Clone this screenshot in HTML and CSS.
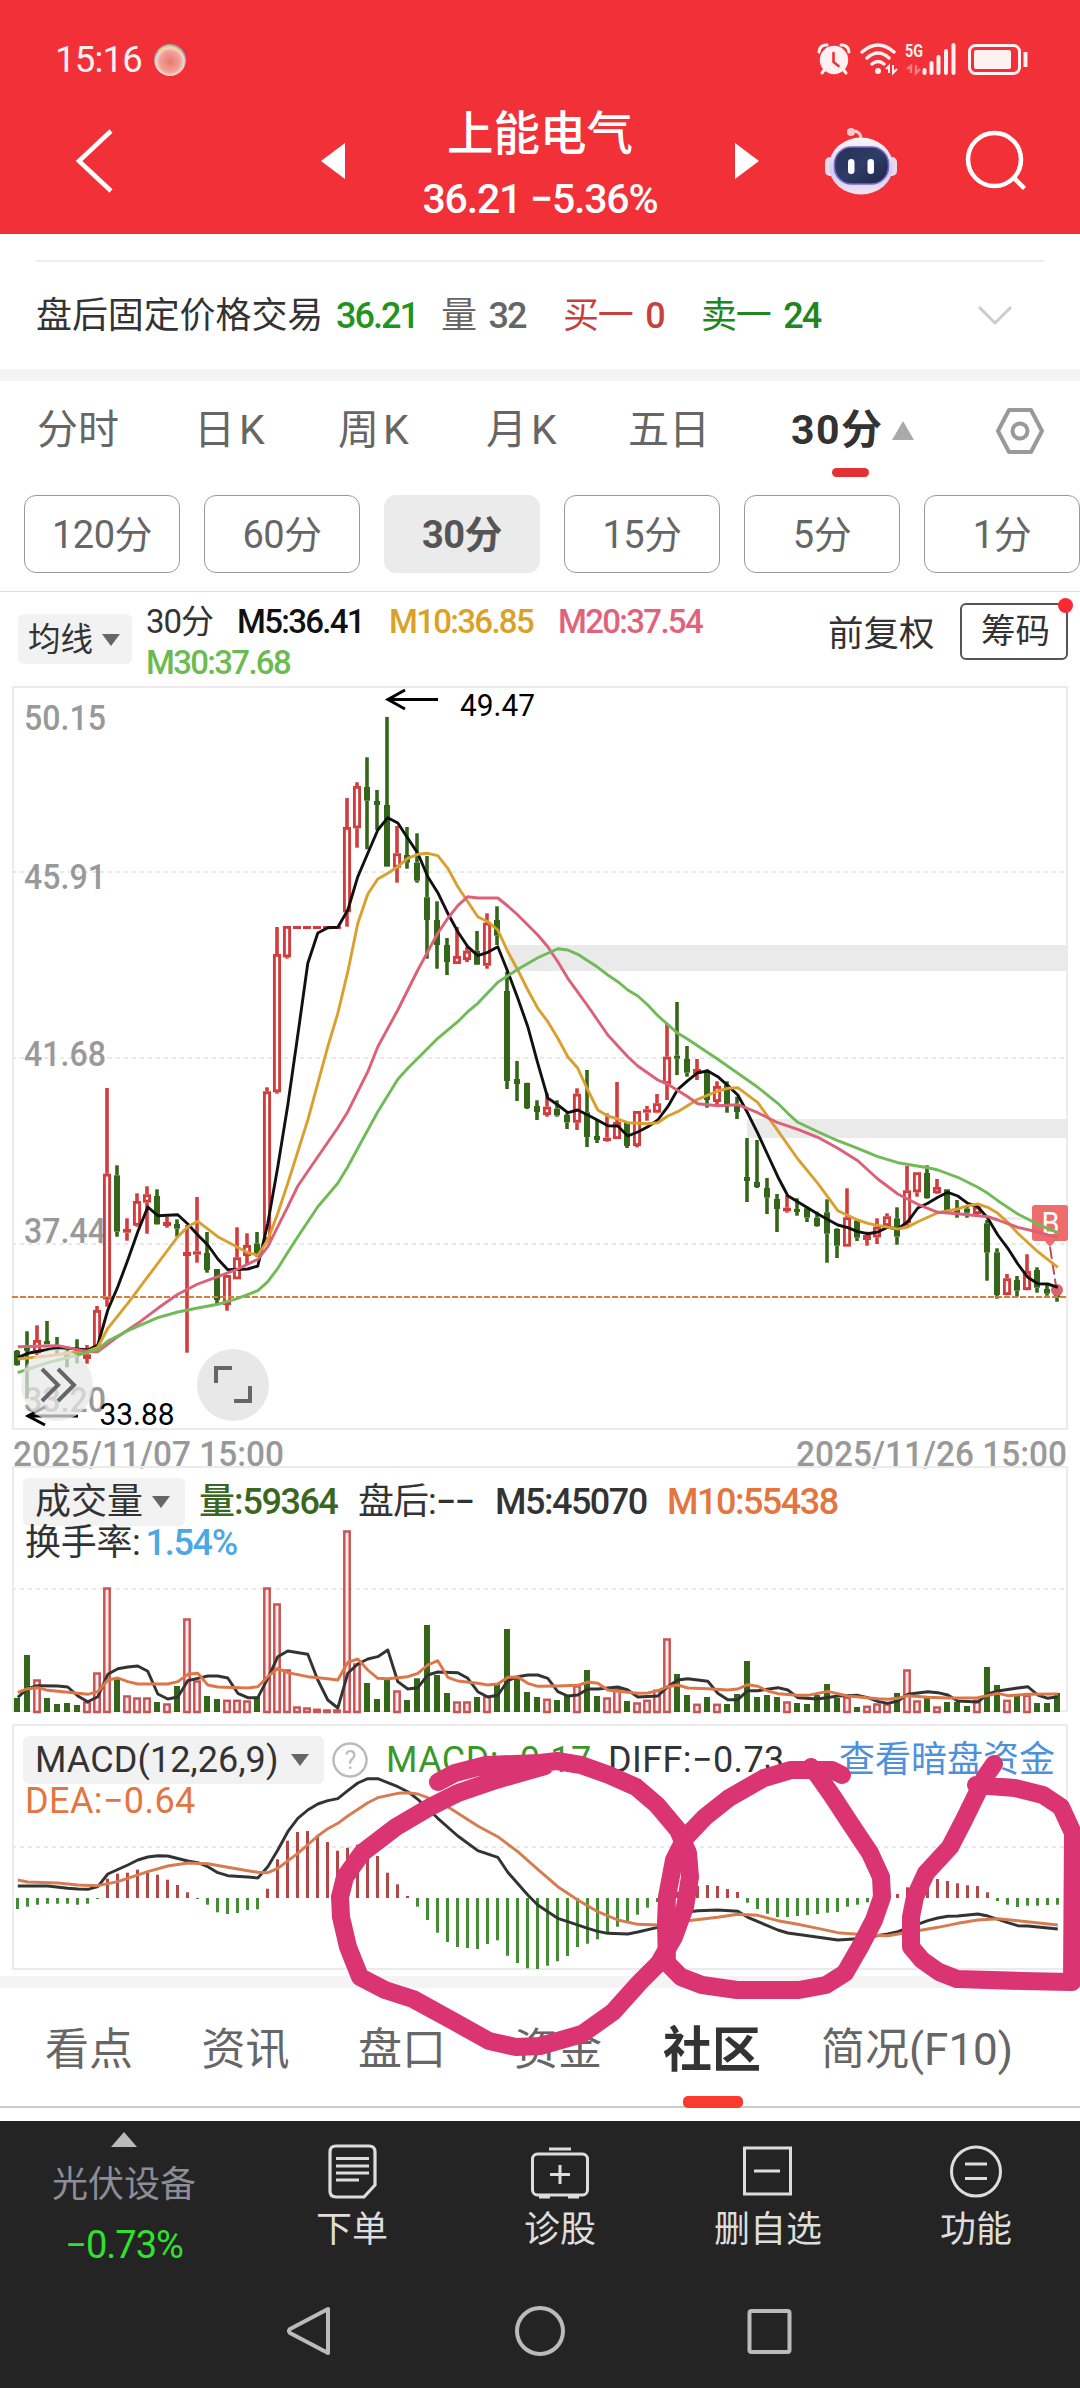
FILE: index.html
```
<!DOCTYPE html>
<html lang="zh-CN">
<head>
<meta charset="utf-8">
<title>上能电气 36.21</title>
<link rel="stylesheet" href="styles.css">
</head>
<body>
<div class="screen">
<header class="header">
  <div class="status">
    <span class="clock">15:16</span>
    <svg class="orb" width="34" height="34" viewBox="0 0 34 34">
      <defs><radialGradient id="orb" cx=".5" cy=".55" r=".5"><stop offset="0" stop-color="#e8796f"/><stop offset=".65" stop-color="#f2a197"/><stop offset=".88" stop-color="#f6d9cc"/><stop offset="1" stop-color="#8f9fc4"/></radialGradient></defs>
      <circle cx="17" cy="17" r="16" fill="url(#orb)"/><path d="M6 8Q17-2 28 9" fill="none" stroke="#f0cf7a" stroke-width="2"/>
    </svg>
    <svg class="status-icons" width="212" height="40" viewBox="816 40 212 40" fill="#fff1f1" stroke="#fff1f1">
      <g stroke="none"><circle cx="834" cy="60" r="14.2"/><path d="M818 50q1-6 8-6l-7 7zM850 50q-1-6-8-6l7 7z"/></g>
      <path d="M819 52a7 7 0 0 1 8-7M849 52a7 7 0 0 0-8-7M825 69l-3 4M843 69l3 4" fill="none" stroke-width="3" stroke-linecap="round"/>
      <path d="M833.500 53v9l5 4" fill="none" stroke="#f23037" stroke-width="2.600" stroke-linecap="round"/>
      <g fill="none" stroke-width="3.400" stroke-linecap="round"><path d="M862 52q16-14 32 0M867 58q11-10 22 0M872 64q6-5 12 0"/></g>
      <circle cx="878" cy="71" r="3" stroke="none"/>
      <path d="M889 73V66l-3 3M893 65v8l4-4" fill="none" stroke-width="2"/>
      <text x="905" y="57" class="net" textLength="18" lengthAdjust="spacingAndGlyphs" stroke="none">5G</text>
      <path d="M911 73V66l-4 3M916 65v8l4-4" fill="none" stroke="#f88085" stroke-width="2.400"/>
      <g fill="none" stroke-width="4" stroke-linecap="round"><path d="M924.500 70v3M931.500 63v10M938.500 57v16M946 51v22M953.500 45v28"/></g>
      <rect x="969.500" y="45.500" width="50" height="28" rx="6" fill="none" stroke-width="3"/>
      <rect x="974" y="50" width="37" height="19" rx="2" stroke="none"/><path d="M1025.500 52v15" stroke-width="4"/>
    </svg>
  </div>
  <div class="titlebar">
    <svg width="60" height="80" viewBox="60 120 60 80"><path d="M111 130L79 160L111 190" fill="none" stroke="#fff" stroke-width="4.500"/></svg>
    <svg width="26" height="38" viewBox="320 143 26 38"><path d="M345 144V180L321 162z" fill="#fff"/></svg>
    <div class="title"><h1>上能电气</h1><p>36.21 −5.36%</p></div>
    <svg width="26" height="38" viewBox="734 143 26 38"><path d="M735 144V180L759 162z" fill="#fff"/></svg>
    <svg class="robot" width="76" height="70" viewBox="823 124 76 70">
      <defs>
        <linearGradient id="hd" x1="0" y1="0" x2="0" y2="1"><stop offset="0" stop-color="#fdf4f7"/><stop offset=".6" stop-color="#cfcdf0"/><stop offset="1" stop-color="#f1e3f2"/></linearGradient>
        <linearGradient id="face" x1="0" y1="0" x2="1" y2="1"><stop offset="0" stop-color="#243257"/><stop offset=".5" stop-color="#2e3c66"/><stop offset="1" stop-color="#1b2547"/></linearGradient>
      </defs>
      <path d="M861 137q0-8-8-8" fill="none" stroke="#f9c9cd" stroke-width="3"/><circle cx="851" cy="130" r="4" fill="#f9c9cd"/>
      <rect x="825" y="155" width="12" height="19" rx="5" fill="#e9d9ee"/><rect x="885" y="155" width="12" height="19" rx="5" fill="#e9d9ee"/>
      <ellipse cx="861" cy="164" rx="32" ry="28.500" fill="url(#hd)"/>
      <rect x="834.500" y="145" width="54" height="37" rx="17" fill="url(#face)" stroke="#7a66cf" stroke-width="1.600"/>
      <rect x="848" y="157" width="6.500" height="15" rx="3.200" fill="#fff"/><rect x="867.500" y="157" width="6.500" height="15" rx="3.200" fill="#fff"/>
    </svg>
    <svg class="search" width="64" height="64" viewBox="963 130 64 64" fill="none" stroke="#fff" stroke-width="4.500"><circle cx="994.500" cy="160.500" r="26.500"/><path d="M1014 179l10.500 10.500"/></svg>
  </div>
</header>

<section class="fixed-price">
  <span class="c1">盘后固定价格交易</span><b class="c2 green">36.21</b><span class="c3">量 <b>32</b></span><span class="c4">买一 <b>0</b></span><span class="c5">卖一 <b>24</b></span>
  <svg width="40" height="26" viewBox="0 0 40 26"><path d="M4 4L20 20L36 4" fill="none" stroke="#ccc" stroke-width="3"/></svg>
</section>
<div class="gap"></div>

<nav class="periods">
  <span>分时</span><span>日<i>K</i></span><span>周<i>K</i></span><span>月<i>K</i></span><span>五日</span><span class="on">30分<svg width="24" height="20" viewBox="0 0 24 20"><path d="M12 0L23 19H1z" fill="#aaa"/></svg></span>
  <svg width="52" height="50" viewBox="0 0 52 50" fill="none" stroke="#999" stroke-width="4" stroke-linejoin="round"><path d="M15 4H37L48 25L37 46H15L4 25z"/><circle cx="26" cy="25" r="7.500"/></svg>
</nav>
<div class="pills"><span>120分</span><span>60分</span><span class="on">30分</span><span>15分</span><span>5分</span><span>1分</span></div>

<section class="ma">
  <div class="drop">均线<svg width="20" height="14" viewBox="0 0 20 14"><path d="M1 1H19L10 13z" fill="#666"/></svg></div>
  <div class="ma-values"><span style="width:91px">30分</span><b style="width:152px;color:#111">M5:36.41</b><b style="width:169px;color:#dba126">M10:36.85</b><b style="color:#e0637b">M20:37.54</b><b class="line2" style="color:#6cbb52">M30:37.68</b></div>
  <span class="adjust">前复权</span>
  <div class="chips">筹码<i></i></div>
</section>

<svg id="price" class="chart" width="1080" height="780"></svg>

<section class="panel volume">
  <svg id="vol" class="chart" width="1080" height="250"></svg>
  <div class="head">
    <div class="drop wide">成交量<svg width="20" height="14" viewBox="0 0 20 14"><path d="M1 1H19L10 13z" fill="#666"/></svg></div>
    <span style="width:159px;color:#3a6620"><em>量:</em><b>59364</b></span><span style="width:137px">盘后:<b>−−</b></span><b style="width:172px">M5:45070</b><b style="color:#e4753f">M10:55438</b>
  </div>
  <div class="head second">换手率:<b class="rate" style="color:#4ba8e2">1.54%</b></div>
</section>

<section class="panel macd">
  <svg id="macd" class="chart" width="1080" height="266"></svg>
  <div class="head">
    <div class="drop macd-drop"><b class="t-macd">MACD(12,26,9)</b><svg width="20" height="14" viewBox="0 0 20 14"><path d="M1 1H19L10 13z" fill="#666"/></svg></div>
    <svg class="help" width="38" height="38" viewBox="0 0 38 38"><circle cx="19" cy="19" r="16.500" fill="none" stroke="#bbb" stroke-width="2.500"/><text x="19" y="28" text-anchor="middle" class="q">?</text></svg>
    <b class="t-val" style="width:222px;color:#3b9728">MACD:−0.17</b><b class="t-val" style="width:231px">DIFF:−0.73</b><span class="link">查看暗盘资金</span>
  </div>
  <div class="head second"><b class="t-val" style="color:#e4753f">DEA:−0.64</b></div>
</section>
<div class="gap"></div>

<nav class="tabs"><span>看点</span><span>资讯</span><span>盘口</span><span>资金</span><span class="on">社区</span><span>简况(F10)</span></nav>

<footer class="footer">
  <div class="actions">
    <div class="sector"><svg width="26" height="16" viewBox="0 0 26 16"><path d="M13 0L26 15H0z" fill="#bbb"/></svg><span>光伏设备</span><b>−0.73%</b></div>
    <div class="action"><svg width="60" height="60" viewBox="322 2141 60 60" fill="none" stroke="#ddd" stroke-width="3.200"><path d="M336 2146h33q6 0 6 6v33l-11 12h-28q-6 0-6-6v-39q0-6 6-6z"/><path d="M336 2158.500h33M336 2166h33M336 2173h33M336 2180h23"/></svg>下单</div>
    <div class="action"><svg width="60" height="60" viewBox="530 2141 60 60" fill="none" stroke="#ddd" stroke-width="3"><rect x="532.500" y="2154" width="55" height="41" rx="5"/><path d="M549 2149h22M560 2165v19M550 2174.500h20M539 2197h11M568 2197h11"/></svg>诊股</div>
    <div class="action"><svg width="60" height="60" viewBox="738 2141 60 60" fill="none" stroke="#ddd" stroke-width="3"><rect x="744.500" y="2148" width="46" height="46"/><path d="M754 2171h26"/></svg>删自选</div>
    <div class="action"><svg width="60" height="60" viewBox="946 2141 60 60" fill="none" stroke="#ddd" stroke-width="3"><circle cx="976" cy="2171.500" r="24.500"/><path d="M965 2164h22M965 2178.500h22"/></svg>功能</div>
  </div>
  <div class="sysnav">
    <svg width="50" height="56" viewBox="284 2303 50 56"><path d="M328 2309V2353L290 2333q-2-2 0-4z" fill="none" stroke="#bbb" stroke-width="4" stroke-linejoin="round"/></svg>
    <svg width="56" height="56" viewBox="512 2303 56 56"><circle cx="540" cy="2331" r="23" fill="none" stroke="#bbb" stroke-width="4"/></svg>
    <svg width="50" height="56" viewBox="744 2303 50 56"><rect x="749.500" y="2311" width="40" height="41" rx="2" fill="none" stroke="#bbb" stroke-width="4"/></svg>
  </div>
</footer>

<svg class="ink" width="1080" height="330" viewBox="0 1740 1080 330" fill="none" stroke="#da3473" stroke-width="18" stroke-linecap="round" stroke-linejoin="round">
  <path d="M438 1782L455 1773L486 1765L540 1763L557 1761L581 1765L609 1775L636 1787L657 1805L678 1830L688 1853L690 1877L685 1907L674 1937L659 1963L640 1982L613 2012L582 2034L540 2046L516 2047L489 2041L455 2022L413 1999L385 1990L360 1977L348 1947L341 1917L340 1897L345 1877L362 1853L396 1827L430 1807L458 1793L496 1780L545 1766"/>
  <path d="M842 1775L832 1770L791 1770L764 1778L729 1798L705 1817L685 1838L674 1860L667 1897L666 1923L667 1963L681 1977L702 1985L737 1990L799 1990L826 1985L845 1973L860 1947L874 1920L882 1897L881 1877L870 1853L850 1823L833 1797L819 1777L811 1767"/>
  <path d="M994 1764L985 1777L964 1820L950 1847L926 1873L915 1897L911 1917L911 1947L922 1960L939 1972L957 1979L1022 1981L1072 1982L1073 1833L1061 1807L1043 1795L1015 1788L976 1785"/>
</svg>
</div>
<script src="charts.js"></script>
</body>
</html>
```
FILE: styles.css
```
* { box-sizing: border-box; }
body { margin: 0; background: #fff; color: #333; font: 36px/1 Roboto, "Noto Sans CJK SC", sans-serif; }
svg { display: block; flex: none; }
b { font-weight: 500; }
i, em { font-style: normal; }
.screen { position: relative; width: 1080px; height: 2388px; overflow: hidden; display: flex; flex-direction: column; }
.screen > * { flex: none; }

.header { height: 234px; background: #f23037; color: #fff; }
.status { height: 120px; padding: 0 52px 0 55px; display: flex; align-items: center; }
.clock { font-size: 36.500px; letter-spacing: -.8px; width: 98px; color: #fff1f1; }
.status-icons { margin-left: auto; }
.net { font: 700 18px Roboto, sans-serif; }
.titlebar { margin-top: -19px; height: 120px; padding: 0 53px 0 60px; display: flex; align-items: center; }
.titlebar > svg:first-child { margin-right: 200px; }
.title { width: 388px; text-align: center; padding-top: 2px; }
.title h1 { margin: 0; font-size: 46.500px; font-weight: 500; line-height: 60px; }
.title p { margin: 13px 0 0; font-size: 41px; line-height: 44px; letter-spacing: -.8px; font-weight: 500; letter-spacing: -1.200px; }
.titlebar .robot { margin-left: 63px; }
.titlebar .search { margin-left: auto; }

.fixed-price { height: 109px; margin: 26px 36px 0; border-top: 2px solid #ececec; display: flex; align-items: center; font-size: 36px; letter-spacing: -1.200px; }
.fixed-price .c1 { width: 300px; letter-spacing: -.1px; }
.fixed-price span { word-spacing: 5px; }
.c2 { width: 105px; letter-spacing: -2px; }
.c3 b, .c5 b { letter-spacing: -2px; }
.c3 { width: 122px; color: #666; }
.c4 { width: 138px; color: #c73f3e; }
.c5 { color: #22851d; }
.green { color: #22931d; }
.fixed-price svg { margin-left: auto; margin-right: 29px; }
.gap { height: 12px; background: #f4f4f4; }

.periods { height: 114px; padding: 2px 34px 17px 37px; display: grid; grid-template-columns: 157px 144px 148px 142px 163px 1fr 52px; align-items: center; color: #666; font-size: 41px; }
.periods i { margin-left: 4px; }
.periods .on { position: relative; display: flex; align-items: center; font-weight: 700; color: #333; letter-spacing: 1.500px; }
.periods .on svg { margin-left: 7px; }
.periods .on::after { content: ""; position: absolute; left: 41px; top: 58px; width: 37px; height: 9px; border-radius: 5px; background: #e23233; }
.pills { height: 97px; padding-left: 24px; display: flex; gap: 24px; border-bottom: 1px solid #ddd; }
.pills span { width: 156px; height: 78px; border: 1.500px solid #999; border-radius: 12px; font-size: 38px; line-height: 78px; text-align: center; color: #666; letter-spacing: -.5px; }
.pills .on { background: #ebebeb; border-color: #ebebeb; font-weight: 700; color: #555; }

.ma { height: 88px; padding: 0 12px 0 18px; display: flex; font-size: 33px; }
.drop { display: flex; align-items: center; justify-content: space-between; width: 114px; height: 50px; margin-top: 22px; padding: 2px 11px 0 10px; border-radius: 6px; background: #f2f2f2; font-size: 32.500px; flex: none; }
.ma-values { width: 696px; flex: none; padding: 9px 0 0 14px; display: flex; flex-wrap: wrap; align-content: flex-start; font-size: 33px; line-height: 41px; letter-spacing: -1.700px; }
.ma-values span { letter-spacing: -1px; }
.ma-values .line2 { width: 100%; }
.adjust { width: 132px; flex: none; margin-top: 12px; line-height: 60px; font-size: 35.500px; }
.chips { position: relative; flex: none; width: 108px; height: 57px; margin-top: 11px; padding-left: 3px; border: 2px solid #555; border-radius: 6px; font-size: 34.500px; line-height: 53px; text-align: center; }
.chips i { position: absolute; right: -7px; top: -7px; width: 15px; height: 15px; border-radius: 50%; background: #fa2a35; }

.chart { overflow: visible; }
.chart text { font-family: Roboto, sans-serif; }
.panel { display: grid; grid-template-rows: 66px 1fr; height: 250px; }
.panel > * { grid-column: 1; }
.panel > .chart { grid-row: 1 / 3; }
.head { grid-row: 1; display: flex; align-items: flex-start; padding: 18px 0 0 23px; line-height: 49px; letter-spacing: -1px; }
.head b { letter-spacing: -1.500px; }
.head em { font-weight: 500; }
.head.second { grid-row: 2; padding: 0 0 0 25px; line-height: 34px; letter-spacing: -.3px; }
.head .rate { margin-left: 5px; letter-spacing: -1.300px; }
.head .drop { margin: 0 14px 0 0; height: 48px; width: 162px; padding: 0 14px 0 12px; font-size: 36px; letter-spacing: 0; }
.macd { height: 266px; grid-template-rows: 74px 1fr; }
.macd .head { padding-top: 26px; }
.macd .head.second { padding-top: 0; }
.head .macd-drop { width: 301px; margin-right: 7px; }
.head .t-macd { letter-spacing: .1px; font-weight: 400; }
.head .t-val { font-weight: 400; letter-spacing: .4px; }
.help { margin: 5px 17px 0 0; }
.chart + .head .q { font-family: Roboto; font-size: 25px; fill: #bbb; }
.link { color: #4f90dc; letter-spacing: 0; }

.tabs { height: 120px; padding: 6px 0 0 45px; display: grid; grid-template-columns: 156.500px 156.500px 156px 149px 158px 1fr; align-items: center; border-bottom: 2px solid #ccc; font-size: 44px; color: #666; }
.tabs .on { position: relative; font-size: 49px; font-weight: 700; color: #333; }
.tabs .on::after { content: ""; position: absolute; left: 20px; bottom: -33px; width: 60px; height: 12px; border-radius: 5px; background: #fa3a2f; }

.footer { margin-top: 13px; height: 267px; background: #242424; color: #ddd; }
.actions { height: 180px; display: grid; grid-template-columns: 248px repeat(4, 208px); }
.sector { padding-top: 11px; display: flex; flex-direction: column; align-items: center; color: #8d8c97; }
.sector span { margin-top: 19px; line-height: 36px; }
.sector b { margin-top: 23px; font-size: 38px; font-weight: 400; color: #2ee22e; letter-spacing: -1px; }
.action { padding-top: 20px; display: flex; flex-direction: column; align-items: center; gap: 11px; }
.sysnav { padding-left: 284px; display: flex; gap: 178px; }
.sysnav svg { margin-top: 2px; }
.sysnav svg:nth-child(3) { margin-left: -2px; }

.ink { position: absolute; left: 0; top: 1740px; }
```
FILE: charts.js
```
// All vertical values are in thirds of a pixel from the top of each chart.
const RED = '#d23c3c', GREEN = '#34661a';
const X = i => 17 + 10 * i, Y = v => (v / 3).toFixed(1);
const rect = (x, y, w, h, a) => `<rect x="${x}" y="${y}" width="${w}" height="${h}" ${a}/>`;
const line = (x1, y1, x2, y2, a) => `<path d="M${x1} ${y1}L${x2} ${y2}" ${a}/>`;
const curve = (s, c, w = 2.9) => `<polyline points="${s.trim().split(/\s+/).map(p => { const [i, v] = p.split(','); return (+X(+i) + .8) + ',' + Y(v); }).join(' ')}" fill="none" stroke="${c}" stroke-width="${w}" stroke-linejoin="round"/>`;
const grid = y => line(12, y, 1066, y, 'stroke="#e9e9e9" stroke-width="2" stroke-dasharray="4 4"');
const frame = (y1, y2) => rect(13, y1, 1054, y2 - y1, 'fill="none" stroke="#ebebeb" stroke-width="2"');
const label = (x, y, w, t, c, s = 35, k = 500) => `<text x="${x}" y="${y}" font-size="${s}" font-weight="${k}" fill="${c}" textLength="${w}" lengthAdjust="spacingAndGlyphs">${t}</text>`;

// high, body top, body bottom, low
const candles = `g2010,2013,2055,2057 g1954,2003,2010,2156 r1936,1980,2020,2025 g1923,1983,1993,1993 g1971,1998,2002,2022
g2010,2015,2035,2062 g1978,2018,2024,2050 r1995,2023,2037,2051 r1878,1890,2010,2012 r1224,1481,1858,1880
g1456,1486,1655,1670 r1615,1647,1658,1682 r1540,1563,1637,1640 r1519,1543,1568,1661 g1528,1548,1633,1634
r1610,1626,1638,1643 g1618,1632,1646,1670 r1635,1716,1728,2018 r1551,1714,1724,1748 g1656,1719,1770,1778
g1767,1767,1860,1875 r1785,1785,1875,1892 r1642,1732,1798,1798 r1660,1695,1728,1755 g1656,1691,1722,1730
r1222,1234,1680,1685 r741,822,1237,1241 r738,738,832,836 r738,738,746,746 r738,738,746,746
r738,738,746,746 r738,738,746,746 r738,738,746,746 r354,441,697,740 r307,318,445,503
g232,321,362,508 g330,363,375,450 g111,375,560,560 r438,520,563,608 g441,525,548,566
g460,548,602,608 g528,652,720,836 g664,720,795,866 g774,795,846,885 r741,828,852,852
r800,812,840,846 g753,812,854,855 r700,728,857,866 g679,720,767,795 g875,933,1203,1227
g1143,1197,1212,1263 g1208,1209,1284,1287 g1261,1278,1296,1320 r1240,1280,1305,1310 g1261,1286,1306,1310
g1300,1305,1327,1347 r1225,1241,1328,1350 g1170,1297,1371,1401 g1320,1368,1380,1389 r1300,1373,1383,1385
r1206,1326,1377,1377 g1325,1327,1398,1404 r1293,1293,1398,1402 r1278,1288,1298,1322 r1242,1270,1298,1300
r1032,1130,1212,1260 g966,1127,1136,1185 g1098,1137,1178,1190 r1137,1167,1182,1200 g1168,1173,1260,1283
r1204,1218,1266,1280 g1204,1215,1275,1298 g1250,1278,1296,1317 g1374,1491,1503,1566 g1380,1506,1521,1524
g1494,1524,1553,1602 g1542,1557,1587,1656 r1545,1583,1594,1598 g1555,1587,1592,1607 g1580,1585,1613,1626
g1595,1613,1638,1640 g1558,1597,1661,1748 g1645,1647,1697,1734 r1525,1612,1700,1700 g1618,1622,1673,1683
r1655,1665,1680,1697 r1615,1640,1672,1692 r1600,1609,1638,1640 g1582,1615,1670,1694 r1458,1531,1630,1637
r1477,1477,1537,1550 g1456,1479,1554,1556 r1497,1521,1540,1542 g1528,1528,1590,1590 g1560,1590,1597,1613
g1575,1586,1598,1613 r1575,1580,1602,1605 g1620,1630,1718,1802 g1705,1717,1845,1856 r1782,1795,1845,1846
g1788,1800,1832,1850 r1723,1773,1830,1831 g1762,1770,1823,1838 g1812,1827,1841,1847 g1830,1837,1852,1865`.split(/\s+/);

let s = frame(7, 749);
s += rect(508, 265, 560, 26, 'fill="#eaeaea"') + rect(747, 439, 321, 19, 'fill="#eaeaea"') + rect(988, 537, 80, 3, 'fill="#eee"');
s += grid(192) + grid(378) + grid(564);
[['50.15', 49.5], ['45.91', 209], ['41.68', 386], ['37.44', 563], ['33.20', 732]].forEach(([t, y]) => s += label(24, y, 82, t, '#999'));
candles.forEach((c, i) => {
  const [h, a, b, l] = c.slice(1).split(',').map(Number), x = X(i), up = c[0] === 'r', col = up ? RED : GREEN;
  const wick = `stroke="${col}" stroke-width="3.6"`;
  if (a > h) s += line(x, Y(h), x, Y(a), wick);
  if (l > b) s += line(x, Y(b), x, Y(l), wick);
  const hh = Math.max(3, (b - a) / 3);
  s += up && hh > 6 ? rect(x - 2.6, (a / 3 + 1.4).toFixed(1), 5.2, (hh - 2.8).toFixed(1), `fill="#fff" stroke="${col}" stroke-width="2.9"`)
    : rect(x - (up ? 4 : 3), Y(a), up ? 8 : 6, hh, `fill="${col}"`);
});
s += line(12, 617, 1066, 617, 'stroke="#d0803c" stroke-width="2" stroke-dasharray="6 2"');
s += rect(1032, 525, 36, 36, 'rx="3" fill="#ee6c6c"') + '<path d="M1044 560h12l-6 7z" fill="#ee6c6c"/>' + label(1041.5, 554, 18, 'B', '#fff', 32, 400);
s += '<circle cx="1057" cy="610" r="6" fill="#d9646c"/>' + line(1050, 567, 1056, 606, 'stroke="#c94a55" stroke-width="2" stroke-dasharray="12 4"');
s += curve(`0,2033 1,2020 4,2003 5,2005 7,2010 8,1995 9,1890 10,1820 11,1740 12,1655 13,1581 14,1607 16,1604 17,1632 18,1665 19,1695 20,1737 21,1769 23,1767 24,1758 25,1630 26,1460 27,1275 28,1065 29,850 30,759 31,743 32,742 33,690 34,590 35,520 36,450 37,413 38,429 39,475 40,520 41,590 42,638 43,700 44,755 45,800 46,827 47,817 48,800 49,875 50,955 51,1040 52,1150 53,1254 54,1275 55,1298 56,1290 57,1305 58,1321 59,1337 60,1338 61,1368 62,1356 63,1340 64,1320 65,1280 66,1228 67,1202 68,1178 69,1173 70,1190 71,1217 72,1245 73,1300 74,1360 75,1425 76,1490 77,1547 80,1602 82,1635 83,1643 84,1655 85,1661 86,1656 87,1642 88,1647 89,1625 90,1584 91,1570 92,1552 93,1537 94,1548 95,1570 96,1580 97,1615 98,1665 99,1705 100,1752 101,1792 102,1811 103,1812 104,1822`, '#111');
s += curve(`0,2037 3,2028 5,2020 7,2013 8,2002 9,1945 11,1870 13,1790 15,1710 16,1670 17,1640 18,1624 20,1670 21,1686 23,1718 24,1726 25,1680 26,1600 27,1510 29,1320 30,1210 31,1100 32,1000 33,875 34,730 35,642 36,597 37,580 38,560 39,535 40,523 41,520 42,527 43,565 44,620 46,710 47,725 48,750 49,815 50,870 51,930 52,985 53,1025 54,1075 55,1130 56,1165 57,1230 58,1290 59,1308 60,1317 61,1328 63,1331 64,1328 65,1308 66,1295 68,1258 70,1233 71,1225 72,1223 74,1268 75,1310 76,1352 78,1437 80,1510 82,1592 84,1620 85,1630 86,1636 88,1647 89,1641 90,1625 92,1598 94,1587 95,1577 96,1572 97,1582 98,1600 99,1627 100,1660 102,1715 104,1762`, '#d9a02e');
s += curve(`0,2000 4,1997 7,2015 8,2015 10,1970 12,1930 14,1885 16,1843 18,1812 20,1790 22,1767 24,1738 25,1700 26,1640 27,1580 28,1518 30,1430 32,1343 33,1295 35,1175 36,1100 38,990 40,870 42,760 43,715 44,677 45,650 46,654 48,654 49,678 50,705 51,735 52,765 53,800 54,845 55,895 57,978 59,1065 61,1130 62,1158 64,1200 65,1213 67,1250 68,1271 70,1277 72,1274 74,1298 76,1328 78,1348 80,1372 82,1405 84,1442 86,1497 88,1542 90,1573 92,1597 94,1601 97,1610 98,1620 100,1642 102,1656 103,1665 104,1672`, '#dc6078');
s += curve(`0,2078 3,2048 6,2025 8,2008 9,1983 11,1952 14,1913 16,1896 18,1884 20,1873 22,1855 24,1832 25,1805 26,1765 27,1717 28,1670 30,1580 32,1510 33,1460 34,1405 36,1295 38,1198 39,1165 40,1135 41,1105 42,1075 44,1025 45,995 46,970 48,907 50,868 52,833 54,806 55,810 56,823 58,862 59,885 60,905 61,930 62,948 63,975 64,1007 66,1060 67,1078 70,1138 72,1180 74,1222 76,1270 77,1300 78,1327 80,1355 82,1382 84,1405 86,1430 88,1448 91,1463 92,1470 94,1492 96,1522 97,1540 98,1562 100,1602 102,1633 104,1658`, '#70ba58');
s += '<path d="M438 19.500H388M405 10L388 19.500L405 29M78 736H28M45 727L28 736L45 745" fill="none" stroke="#000" stroke-width="3"/>';
s += label(460, 36, 75, '49.47', '#000', 31, 400) + label(99.5, 745, 75, '33.88', '#000', 31, 400);
s += '<g fill="#e8e8e8"><circle cx="57" cy="705" r="36" opacity=".72"/><circle cx="233" cy="705" r="36"/></g>';
s += '<path d="M42 689L58 705L42 721M58 689L74 705L58 721M216 703V688H232M234 721H250V706" fill="none" stroke="#666" stroke-width="4"/>';
s += label(13, 786, 271, '2025/11/07 15:00', '#999') + label(796, 786, 271, '2025/11/26 15:00', '#999');
price.innerHTML = s;

const volumes = `g714 g585 r659 g714 g732 g729 g735 r725 r638 r383 g655 r707 r713 r713 g726 r731 g678 r476 r662 g708 g717 r720 r720 r722 g710 r383 r431 r629 r740 r743 r747 r749 r749 r212 r611 g669 g717 g655 r692 g720 g655 g495 g645 g699 r725 r725 g711 r708 g670 g507 g655 g696 g711 r717 g720 g708 r677 g630 g708 r713 r686 g723 r728 r720 r690 r536 g642 g705 r732 g711 r732 g732 g702 g603 g711 g705 g711 r725 g729 g732 g705 g672 g714 r711 g741 r738 r731 r731 g699 r629 r722 g714 r740 g726 g726 g738 r720 g621 g675 r720 g705 r705 g729 g729 g699`.split(' ');
s = frame(7, 251) + grid(129);
volumes.forEach((v, i) => {
  const y = v.slice(1) / 3, x = X(i), h = 252 - y;
  s += v[0] === 'r' ? rect(x - 2.7, (y + .8).toFixed(1), 5.4, Math.max(1, h - .8).toFixed(1), 'fill="#fdeeee" stroke="#ca5454" stroke-width="2.5"') : rect(x - 3, y.toFixed(1), 6, h.toFixed(1), `fill="${GREEN}"`);
});
s += curve(`0,712 1,685 2,677 4,678 5,681 6,708 7,725 8,710 9,643 10,626 11,621 12,618 13,634 14,702 15,717 16,711 17,662 18,655 19,648 20,648 21,654 22,700 23,713 24,713 25,655 26,590 27,573 29,583 30,660 31,720 32,744 33,640 34,612 35,597 36,590 37,570 38,665 39,687 40,683 41,645 42,636 44,638 45,655 46,695 47,711 48,706 49,662 50,650 51,645 52,645 53,655 54,695 55,708 56,705 57,687 58,687 60,681 61,690 62,711 64,708 65,680 66,660 67,656 69,664 70,700 71,719 72,719 73,692 74,692 76,683 77,690 78,713 80,717 82,708 84,706 85,713 86,724 87,730 88,723 89,703 91,695 92,698 93,705 94,723 96,726 97,702 98,693 100,684 101,680 102,705 103,715 104,710`, '#333');
s += curve(`0,697 1,686 2,683 3,691 5,697 7,703 8,695 9,660 10,654 11,665 12,672 15,672 16,665 17,643 18,640 19,675 20,681 23,684 24,680 25,650 26,625 27,638 29,650 31,656 32,660 33,607 34,597 35,630 36,655 37,656 39,650 40,640 41,615 42,602 43,652 44,663 46,670 47,675 48,672 49,652 50,651 51,670 52,679 54,678 56,676 57,666 58,670 59,690 60,694 62,700 63,699 64,692 65,680 66,675 67,684 69,686 71,690 72,687 73,674 74,679 75,693 76,701 78,706 79,706 81,694 83,708 86,716 87,718 88,715 89,707 91,712 93,714 96,713 98,700 99,707 101,703 104,702`, '#dd7748');
vol.innerHTML = s;

const bars = [597,590,584,581,581,581,584,581,567,506,491,488,479,485,494,509,525,547,567,584,607,612,609,600,598,536,448,392,366,363,375,396,422,413,404,415,438,488,523,558,590,630,668,696,711,714,717,702,691,737,759,775,777,767,754,738,711,701,688,668,650,637,614,593,576,570,545,530,528,525,528,537,546,578,597,611,621,621,618,615,612,608,606,590,584,577,567,567,552,532,520,515,507,513,520,526,528,547,573,584,591,587,587,585,584];
s = frame(15, 259) + grid(137);
bars.forEach((v, i) => s += rect(X(i) - 1, (Math.min(v, 564) / 3).toFixed(1), 3, (Math.abs(v - 564) / 3).toFixed(1), `fill="${v > 564 ? '#468c36' : '#b34747'}"`));
s += curve(`0,528 3,528 5,535 6,537 7,538 8,530 9,492 11,465 12,450 13,441 14,437 15,438 17,453 18,458 19,470 20,488 21,497 23,501 24,504 25,470 26,420 27,365 28,325 29,300 30,282 31,272 32,266 33,242 34,219 35,206 36,206 38,230 39,245 40,268 42,325 44,378 46,422 48,442 49,487 51,555 52,585 53,605 54,625 55,635 57,655 58,664 59,670 61,672 62,666 64,652 67,606 68,602 70,600 72,604 73,622 76,660 77,669 79,677 82,690 84,686 87,672 88,665 91,632 92,624 93,619 94,618 96,612 97,618 99,638 100,647 101,648 104,657`, '#333');
s += curve(`0,510 1,516 4,519 6,525 8,527 10,515 13,485 15,468 17,459 19,461 21,472 23,482 24,487 25,488 26,475 28,430 30,378 31,356 32,340 33,318 35,278 36,263 38,250 39,248 40,252 41,263 43,290 46,348 48,380 50,425 52,478 54,530 56,570 58,605 60,630 62,643 64,645 67,632 70,622 72,613 74,616 76,632 78,643 80,655 82,668 85,675 87,677 90,662 92,652 94,640 96,630 98,626 100,632 104,645`, '#d67c50');
macd.innerHTML = s;
```
